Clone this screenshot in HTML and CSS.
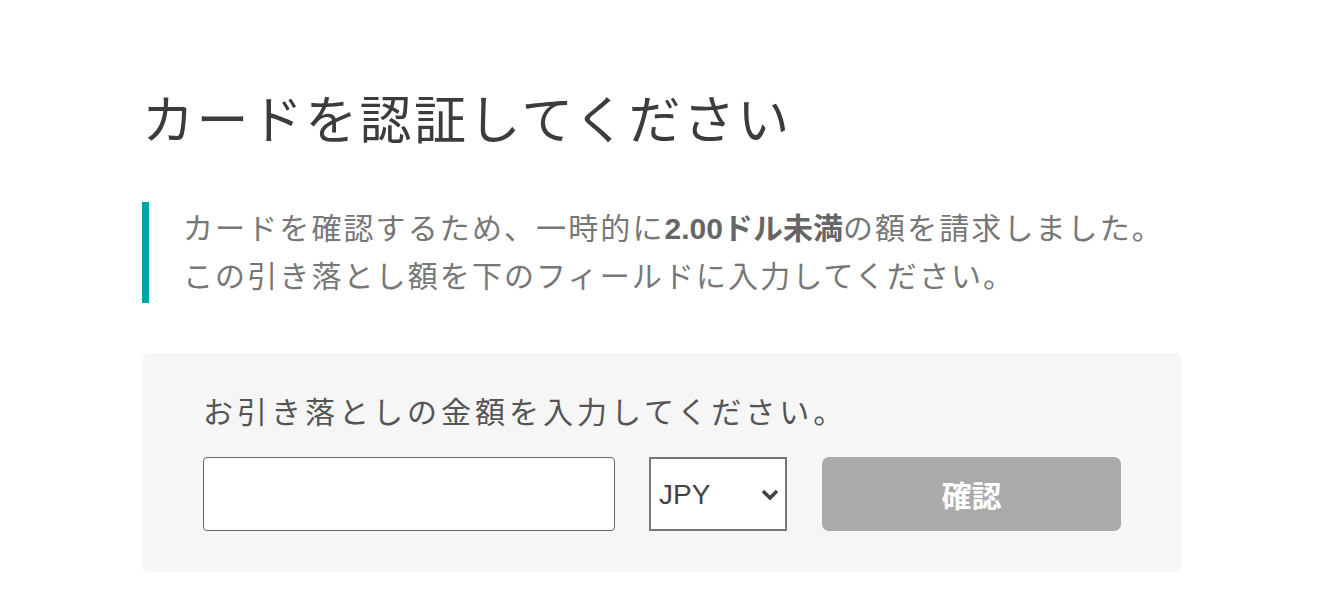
FILE: index.html
```html
<!DOCTYPE html>
<html lang="ja">
<head>
  <meta charset="UTF-8" />
  <title>カードを認証してください</title>
  <link rel="stylesheet" href="styles.css">
</head>
<body>
  <div class="page">
    <h1 class="title">カードを認証してください</h1>

    <div class="notice">
      <p>カードを確認するため、一時的に<b>2.00ドル未満</b>の額を請求しました。</p>
      <p>この引き落とし額を下のフィールドに入力してください。</p>
    </div>

    <form class="verify" onsubmit="return false;">
      <label class="verify-label" for="amount">お引き落としの金額を入力してください。</label>
      <div class="verify-row">
        <input id="amount" class="amount" type="text" />
        <span class="currency">
          <select>
            <option>JPY</option>
            <option>USD</option>
          </select>
          <svg class="chevron" width="18" height="12" viewBox="0 0 18 12">
            <path d="M2 2 L9 9 L16 2" fill="none" stroke="#444" stroke-width="3.4" />
          </svg>
        </span>
        <button class="confirm" disabled>確認</button>
      </div>
    </form>
  </div>
</body>
</html>
```

FILE: styles.css
```css
body {
  margin: 0;
  background: #fff;
  font-family: "Liberation Sans", "Noto Sans CJK JP", sans-serif;
}

.page {
  width: 1040px;
  padding: 90px 0 0 142px;
}

.title {
  margin: 0;
  font-size: 52px;
  font-weight: 400;
  line-height: 62px;
  letter-spacing: 2.4px;
  color: #3c3c3c;
}

.notice {
  margin-top: 50px;
  border-left: 7px solid #00a3a6;
  padding: 3px 0 2px 34px;
  color: #777;
  font-size: 30px;
  line-height: 48px;
  letter-spacing: 2.1px;
}

.notice p {
  margin: 0;
}

.notice b {
  color: #666;
  letter-spacing: 0;
}

.verify {
  margin-top: 50px;
  background: #f6f6f6;
  border-radius: 7px;
  padding: 40px 61px 41px;
}

.verify-label {
  display: block;
  font-size: 30px;
  line-height: 40px;
  letter-spacing: 4px;
  color: #555;
}

.verify-row {
  display: flex;
  gap: 34px;
  margin-top: 24px;
  height: 74px;
}

.amount {
  box-sizing: border-box;
  width: 412px;
  height: 74px;
  border: 1.5px solid #666;
  border-radius: 4px;
  background: #fff;
  font-size: 28px;
  padding: 0 12px;
}

.currency {
  position: relative;
  width: 138px;
}

.currency select {
  appearance: none;
  -webkit-appearance: none;
  box-sizing: border-box;
  width: 138px;
  height: 74px;
  border: 2px solid #777;
  border-radius: 0;
  background: #fff;
  color: #444;
  font-family: "Liberation Sans", sans-serif;
  font-size: 28px;
  padding: 0 0 0 8px;
}

.chevron {
  position: absolute;
  right: 8px;
  top: 32px;
  pointer-events: none;
}

.confirm {
  margin-left: 1px;
  width: 299px;
  height: 74px;
  border: none;
  border-radius: 7px;
  background: #aaa;
  color: #fff;
  font-family: "Noto Sans CJK JP", sans-serif;
  font-size: 30px;
  font-weight: 700;
}
```
